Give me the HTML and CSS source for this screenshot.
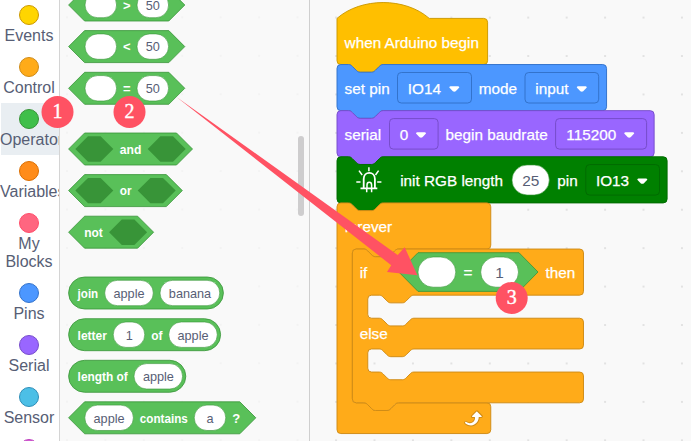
FILE: index.html
```html
<!DOCTYPE html>
<html lang="en">
<head>
<meta charset="utf-8">
<title>Block editor</title>
<link rel="stylesheet" href="styles.css">
</head>
<body>
<div class="editor">
  <nav class="categories">
    <div class="category"><span class="dot events"></span><span class="name">Events</span></div>
    <div class="category"><span class="dot control"></span><span class="name">Control</span></div>
    <div class="category selected"><span class="dot operators"></span><span class="name">Operators</span></div>
    <div class="category"><span class="dot variables"></span><span class="name">Variables</span></div>
    <div class="category"><span class="dot custom"></span><span class="name">My<br>Blocks</span></div>
    <div class="category"><span class="dot pins"></span><span class="name">Pins</span></div>
    <div class="category"><span class="dot serial"></span><span class="name">Serial</span></div>
    <div class="category"><span class="dot sensor"></span><span class="name">Sensor</span></div>
    <div class="category"><span class="dot more"></span></div>
  </nav>

  <section class="palette">
    <svg class="palette-canvas" width="249" height="441" viewBox="60 0 249 441">
      <defs>
        <pattern id="faint-grid" x="66" y="16.4" width="38.43" height="38.43" patternUnits="userSpaceOnUse"><rect width="2" height="2" fill="#f3f3f3"/></pattern>
        <path id="compare" d="M68.6 0L84.6-16H168.8L184.8 0L168.8 16H84.6Z"/>
        <path id="slot" d="M75.3 0L88-12.7H100.6L113.3 0L100.6 12.7H88Z"/>
        <rect id="input" y="-12.7" width="31.6" height="25.4" rx="12.7"/>
        <rect id="word" y="-12.7" width="48.6" height="25.4" rx="12.7"/>
      </defs>
      <rect x="60" width="249" height="441" fill="url(#faint-grid)"/>
      <g transform="translate(0 5)">
        <use href="#compare" class="op"/><use href="#input" x="85" class="field"/><use href="#input" x="137" class="field"/>
        <text class="label mid" x="126.7" y="4.8">&gt;</text><text class="value" x="152.8" y="4.8">50</text>
      </g>
      <g transform="translate(0 46.6)">
        <use href="#compare" class="op"/><use href="#input" x="85" class="field"/><use href="#input" x="137" class="field"/>
        <text class="label mid" x="126.7" y="4.8">&lt;</text><text class="value" x="152.8" y="4.8">50</text>
      </g>
      <g transform="translate(0 88.3)">
        <use href="#compare" class="op"/><use href="#input" x="85" class="field"/><use href="#input" x="137" class="field"/>
        <text class="label mid" x="126.7" y="4.8">=</text><text class="value" x="152.8" y="4.8">50</text>
      </g>
      <g transform="translate(0 149)">
        <path class="op" d="M68.6 0L84.6-16H176.5L192.5 0L176.5 16H84.6Z"/><use href="#slot" class="slot"/><use href="#slot" x="72.4" class="slot"/>
        <text class="label" x="119.8" y="4.8" textLength="21.6" lengthAdjust="spacingAndGlyphs">and</text>
      </g>
      <g transform="translate(0 190.6)">
        <path class="op" d="M68.6 0L84.6-16H166.3L182.3 0L166.3 16H84.6Z"/><use href="#slot" class="slot"/><use href="#slot" x="62.4" class="slot"/>
        <text class="label" x="119.8" y="4.8" textLength="11.8" lengthAdjust="spacingAndGlyphs">or</text>
      </g>
      <g transform="translate(0 232.2)">
        <path class="op" d="M68.6 0L84.6-16H137.6L153.6 0L137.6 16H84.6Z"/><use href="#slot" x="33.8" class="slot"/>
        <text class="label" x="84.2" y="4.8" textLength="18.6" lengthAdjust="spacingAndGlyphs">not</text>
      </g>
      <g transform="translate(0 293)">
        <rect class="op" x="68.6" y="-16" width="154.8" height="32" rx="16"/><use href="#word" x="104.7" class="field"/><rect class="field" x="160" y="-12.7" width="59.8" height="25.4" rx="12.7"/>
        <text class="label" x="77.6" y="4.8" textLength="20.6" lengthAdjust="spacingAndGlyphs">join</text><text class="value" x="129" y="4.8">apple</text><text class="value" x="190" y="4.8">banana</text>
      </g>
      <g transform="translate(0 334.7)">
        <rect class="op" x="68.6" y="-16" width="152" height="32" rx="16"/><use href="#input" x="113.2" class="field"/><use href="#word" x="168.7" class="field"/>
        <text class="label" x="77.6" y="4.8" textLength="29.4" lengthAdjust="spacingAndGlyphs">letter</text><text class="value" x="129.2" y="4.8">1</text><text class="label" x="151.3" y="4.8" textLength="11.3" lengthAdjust="spacingAndGlyphs">of</text><text class="value" x="193" y="4.8">apple</text>
      </g>
      <g transform="translate(0 376.3)">
        <rect class="op" x="68.6" y="-16" width="117.2" height="32" rx="16"/><use href="#word" x="134" class="field"/>
        <text class="label" x="77.6" y="4.8" textLength="50.2" lengthAdjust="spacingAndGlyphs">length of</text><text class="value" x="158.4" y="4.8">apple</text>
      </g>
      <g transform="translate(0 417.8)">
        <path class="op" d="M68.6 0L84.6-16H239.8L255.8 0L239.8 16H84.6Z"/><use href="#word" x="84.8" class="field"/><use href="#input" x="194.2" class="field"/>
        <text class="value" x="109.1" y="4.8">apple</text><text class="label" x="139.8" y="4.8" textLength="48" lengthAdjust="spacingAndGlyphs">contains</text><text class="value" x="210" y="4.8">a</text><text class="label mid" x="236.2" y="4.8">?</text>
      </g>
      <rect x="298" y="136" width="6" height="80" rx="3" fill="#cecdce"/>
    </svg>
  </section>

  <main class="workspace">
    <svg class="script-canvas" width="381" height="441" viewBox="310 0 381 441">
      <defs>
        <pattern id="grid" x="335.1" y="16.6" width="38.43" height="38.43" patternUnits="userSpaceOnUse"><rect width="2" height="2" fill="#e2e2e2"/></pattern>
        <path id="caret" d="M1.2 0H9Q10.2 .1 10.1 1.3L6.500 5Q5.100 5.900 3.700 5L.1 1.300Q0 .1 1.200 0Z" fill="#fff"/>
      </defs>
      <rect x="310" width="381" height="441" fill="url(#grid)"/>
      <g transform="translate(337 18.4) scale(.961)">
        <path fill="#ffbf00" stroke="#cc9900" d="M0 0c25-22 71-22 96 0H152.700a4 4 0 0 1 4 4v40a4 4 0 0 1-4 4H48c-2 0-3 1-4 2l-4 4c-1 1-2 2-4 2H24c-2 0-3-1-4-2l-4-4c-1-1-2-2-4-2H4a4 4 0 0 1-4-4Z"/>
        <path fill="#4c97ff" stroke="#3373cc" d="M0 52a4 4 0 0 1 4-4H12c2 0 3 1 4 2l4 4c1 1 2 2 4 2h12c2 0 3-1 4-2l4-4c1-1 2-2 4-2H276.500a4 4 0 0 1 4 4v40a4 4 0 0 1-4 4H48c-2 0-3 1-4 2l-4 4c-1 1-2 2-4 2H24c-2 0-3-1-4-2l-4-4c-1-1-2-2-4-2H4a4 4 0 0 1-4-4Z"/>
        <path fill="#9966ff" stroke="#774dcb" d="M0 100a4 4 0 0 1 4-4H12c2 0 3 1 4 2l4 4c1 1 2 2 4 2h12c2 0 3-1 4-2l4-4c1-1 2-2 4-2H326a4 4 0 0 1 4 4v40a4 4 0 0 1-4 4H48c-2 0-3 1-4 2l-4 4c-1 1-2 2-4 2H24c-2 0-3-1-4-2l-4-4c-1-1-2-2-4-2H4a4 4 0 0 1-4-4Z"/>
        <path fill="#008000" stroke="#006b00" d="M0 148a4 4 0 0 1 4-4H12c2 0 3 1 4 2l4 4c1 1 2 2 4 2h12c2 0 3-1 4-2l4-4c1-1 2-2 4-2H339.500a4 4 0 0 1 4 4v40a4 4 0 0 1-4 4H48c-2 0-3 1-4 2l-4 4c-1 1-2 2-4 2H24c-2 0-3-1-4-2l-4-4c-1-1-2-2-4-2H4a4 4 0 0 1-4-4Z"/>
        <path class="control-block" d="M0 196a4 4 0 0 1 4-4H12c2 0 3 1 4 2l4 4c1 1 2 2 4 2h12c2 0 3-1 4-2l4-4c1-1 2-2 4-2H156a4 4 0 0 1 4 4v40a4 4 0 0 1-4 4H64c-2 0-3 1-4 2l-4 4c-1 1-2 2-4 2H40c-2 0-3-1-4-2l-4-4c-1-1-2-2-4-2H20a4 4 0 0 0-4 4V396a4 4 0 0 0 4 4H28c2 0 3 1 4 2l4 4c1 1 2 2 4 2h12c2 0 3-1 4-2l4-4c1-1 2-2 4-2H156a4 4 0 0 1 4 4v24a4 4 0 0 1-4 4H4a4 4 0 0 1-4-4Z"/>
        <path class="control-block" d="M16 244a4 4 0 0 1 4-4H28c2 0 3 1 4 2l4 4c1 1 2 2 4 2h12c2 0 3-1 4-2l4-4c1-1 2-2 4-2H252.500a4 4 0 0 1 4 4v40a4 4 0 0 1-4 4H80c-2 0-3 1-4 2l-4 4c-1 1-2 2-4 2H56c-2 0-3-1-4-2l-4-4c-1-1-2-2-4-2H36a4 4 0 0 0-4 4v16a4 4 0 0 0 4 4H44c2 0 3 1 4 2l4 4c1 1 2 2 4 2h12c2 0 3-1 4-2l4-4c1-1 2-2 4-2H252.500a4 4 0 0 1 4 4v24a4 4 0 0 1-4 4H80c-2 0-3 1-4 2l-4 4c-1 1-2 2-4 2H56c-2 0-3-1-4-2l-4-4c-1-1-2-2-4-2H36a4 4 0 0 0-4 4v16a4 4 0 0 0 4 4H44c2 0 3 1 4 2l4 4c1 1 2 2 4 2h12c2 0 3-1 4-2l4-4c1-1 2-2 4-2H252.500a4 4 0 0 1 4 4v24a4 4 0 0 1-4 4H64c-2 0-3 1-4 2l-4 4c-1 1-2 2-4 2H40c-2 0-3-1-4-2l-4-4c-1-1-2-2-4-2H20a4 4 0 0 1-4-4Z"/>
      </g>

      <text class="big" x="344.600" y="48">when Arduino begin</text>

      <text class="big" x="344.600" y="94.200">set pin</text>
      <rect class="menu" stroke="#3373cc" x="397.500" y="72.500" width="74" height="30.500" rx="3.800"/>
      <text class="big" x="407.800" y="94.200">IO14</text><use href="#caret" x="449.200" y="86.300"/>
      <text class="big" x="478.800" y="94.200">mode</text>
      <rect class="menu" stroke="#3373cc" x="525" y="72.500" width="73.700" height="30.500" rx="3.800"/>
      <text class="big" x="535.300" y="94.200">input</text><use href="#caret" x="576.700" y="86.300"/>

      <text class="big" x="344.600" y="140.200">serial</text>
      <rect class="menu" stroke="#774dcb" x="389.500" y="118.600" width="48.600" height="30.500" rx="3.800"/>
      <text class="big" x="399.800" y="140.200">0</text><use href="#caret" x="415.900" y="132.300"/>
      <text class="big" x="445.600" y="140.200">begin baudrate</text>
      <rect class="menu" stroke="#774dcb" x="555.600" y="118.600" width="91" height="30.500" rx="3.800"/>
      <text class="big" x="566.300" y="140.200">115200</text><use href="#caret" x="624.100" y="132.300"/>

      <g class="led">
        <path d="M368.900 167.300V171.300M359 170.600L362.200 175M378.600 170.600L375.500 175M356.300 182H360.500M377.200 182H381.400"/>
        <path class="bulb" d="M360.500 188.300H377.300M363.700 188V179C363.700 170.700 374.900 170.700 374.900 179V188"/>
        <path d="M367 188V185Q367 182.300 369.300 182.300T371.600 185V188M366.700 188V192.300M371.600 188V192.300"/>
      </g>
      <text class="big" x="400.200" y="186.300">init RGB length</text>
      <rect class="field" x="512" y="165" width="37.300" height="30" rx="15"/><text class="big-value" x="530.700" y="186.300">25</text>
      <text class="big" x="557.300" y="186.300">pin</text>
      <rect class="menu" stroke="#006b00" x="585.800" y="164.600" width="73.700" height="30.500" rx="3.800"/>
      <text class="big" x="595.900" y="186.300">IO13</text><use href="#caret" x="637.200" y="178.400"/>

      <text class="big" x="344.600" y="232.200">forever</text>
      <text class="big" x="359.700" y="278">if</text>
      <path class="op" d="M398.800 272L418 252.700H519L538 272L519 291.400H418Z"/>
      <rect class="field" x="418" y="257" width="37.800" height="30.200" rx="15.100"/>
      <text class="big" x="463.500" y="278">=</text>
      <rect class="field" x="480.700" y="257" width="37.800" height="30.200" rx="15.100"/><text class="big-value" x="499.500" y="278">1</text>
      <text class="big" x="545.500" y="278">then</text>
      <text class="big" x="359.700" y="339.300">else</text>
      <g transform="translate(460.300 406.500) scale(.961)">
        <path fill="#cf8b17" d="M23.300 11c-.3.600-.9 1-1.500 1h-1.600c-.1 1.300-.5 2.500-1.100 3.600c-.9 1.700-2.300 3.200-4.100 4.100c-1.700.9-3.600 1.200-5.500.9c-1.800-.3-3.500-1.100-4.900-2.300c-.7-.7-.7-1.900 0-2.600c.6-.6 1.600-.7 2.300-.2H7c.9.6 1.900.9 2.900.9s1.900-.3 2.700-.9c1.100-.8 1.800-2.100 1.800-3.500h-1.500c-.9 0-1.700-.7-1.700-1.700c0-.4.2-.9.500-1.200l4.400-4.400c.7-.6 1.700-.6 2.400 0L23 9.200C23.500 9.700 23.600 10.400 23.300 11Z"/>
        <path fill="#fff" d="M21.800 11h-2.600c0 1.500-.3 2.900-1 4.200c-.8 1.600-2.100 2.800-3.700 3.600c-1.500.8-3.300 1.100-4.900.8c-1.600-.2-3.200-1-4.400-2.100c-.4-.3-.4-.9-.1-1.200c.3-.4.9-.4 1.200-.1c1 .7 2.200 1.100 3.400 1.100s2.300-.3 3.300-1c.9-.6 1.600-1.500 2-2.600c.3-.9.4-1.800.2-2.800h-2.400c-.4 0-.7-.3-.7-.7c0-.2.1-.3.2-.4l4.400-4.400c.3-.3.7-.3.9 0L22 9.800c.3.3.4.6.3.900S22 11 21.800 11Z"/>
      </g>
    </svg>
  </main>

  <svg class="annotations" width="691" height="441" viewBox="0 0 691 441">
    <path fill="#ff5263" d="M176.500 97L397.700 255L404.700 247.300L417.400 275.300L387 272L391.200 265.200Z"/>
    <circle cx="57.500" cy="112" r="16"/><text x="57.500" y="118.300">1</text>
    <circle cx="129.500" cy="112" r="16"/><text x="129.500" y="118.300">2</text>
    <circle cx="511.700" cy="298" r="16"/><text x="511.700" y="304.300">3</text>
  </svg>
</div>
</body>
</html>
```
FILE: styles.css
```css
* {
  box-sizing: border-box;
}

body {
  margin: 0;
  overflow: hidden;
  font-family: "Liberation Sans", Arial, sans-serif;
}

.editor {
  position: relative;
  display: flex;
  width: 691px;
  height: 441px;
  overflow: hidden;
  background: #f9f9f9;
}

.categories {
  flex: none;
  width: 60px;
  height: 441px;
  overflow: hidden;
  background: #fff;
  border-right: 1px solid #d4d4d4;
}

.category {
  display: flex;
  flex-direction: column;
  min-height: 52px;
  padding: 6px 0;
}

.category:first-child {
  margin-top: -1px;
}

.selected {
  margin-left: 1px;
  background: #e9eef2;
}

.selected > * {
  position: relative;
  left: -1px;
}

.dot {
  flex: none;
  width: 20px;
  height: 20px;
  margin-left: 19px;
  border: 1px solid;
  border-radius: 50%;
}

.name {
  align-self: flex-start;
  min-width: 58px;
  margin-top: 2px;
  font-size: 16px;
  line-height: 18px;
  color: #575e75;
  text-align: center;
  white-space: nowrap;
}

.events { background: #ffd500; border-color: #cc9900; }
.control { background: #ffab19; border-color: #cf8b17; }
.operators { background: #40bf4a; border-color: #389438; }
.variables { background: #ff8c1a; border-color: #db6e00; }
.custom { background: #ff6680; border-color: #ff4d6a; }
.pins { background: #4c97ff; border-color: #3373cc; }
.serial { background: #9966ff; border-color: #774dcb; }
.sensor { background: #4cbfe6; border-color: #2e8eb8; }
.more { background: #d65cd6; border-color: #bd42bd; }

.palette {
  flex: none;
  width: 250px;
  border-right: 1px solid #cfcfcf;
}

.workspace {
  flex: 1;
}

.palette-canvas,
.script-canvas {
  display: block;
}

.op {
  fill: #59c059;
  stroke: #389438;
  stroke-width: 0.8;
}

.slot {
  fill: #389438;
}

.field {
  fill: #fff;
  stroke: #389438;
  stroke-width: 0.6;
}

.control-block {
  fill: #ffab19;
  stroke: #cf8b17;
}

.menu {
  fill: none;
  stroke-width: 1;
}

.label {
  fill: #fff;
  font-size: 13px;
  font-weight: bold;
}

.value {
  fill: #575e75;
  font-size: 12.7px;
  text-anchor: middle;
}

.mid {
  text-anchor: middle;
}

.big {
  fill: #fff;
  stroke: #fff;
  stroke-width: 0.25px;
  font-size: 15.3px;
}

.big-value {
  fill: #575e75;
  font-size: 15.4px;
  text-anchor: middle;
}

.led path {
  fill: none;
  stroke: #fff;
  stroke-width: 1.5;
}

.led .bulb {
  stroke-width: 1.8;
}

.annotations {
  position: absolute;
  top: 0;
  left: 0;
}

.annotations circle {
  fill: #ff5263;
}

.annotations text {
  fill: #fff;
  stroke: #fff;
  stroke-width: 0.4px;
  font-family: "Liberation Serif", serif;
  font-size: 20px;
  text-anchor: middle;
}
```
